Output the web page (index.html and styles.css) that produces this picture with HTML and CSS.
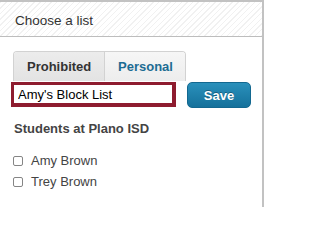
FILE: index.html
```
<!DOCTYPE html>
<html>
<head>
<meta charset="utf-8">
<link rel="stylesheet" href="styles.css">
</head>
<body>
<div class="panel">
  <div class="header">Choose a list</div>
  <div class="content">
    <div class="tabs">
      <div class="tab active">Prohibited</div>
      <div class="tab">Personal</div>
    </div>
    <div class="row">
      <input class="name" type="text" value="Amy's Block List">
      <button class="save">Save</button>
    </div>
    <div class="heading">Students at Plano ISD</div>
    <ul class="students">
      <li><input type="checkbox" class="box"><span>Amy Brown</span></li>
      <li><input type="checkbox" class="box"><span>Trey Brown</span></li>
    </ul>
  </div>
</div>
</body>
</html>
```
FILE: styles.css
```
html, body {
  margin: 0;
  padding: 0;
  background: #fff;
}
body {
  font-family: "Liberation Sans", Arial, sans-serif;
  color: #333;
}
.panel {
  width: 262px;
  height: 205px;
  border-top: 2px solid #c2c2c2;
  border-right: 2px solid #c2c2c2;
}
.header {
  height: 30px;
  padding: 4px 0 0 15px;
  line-height: 30px;
  font-size: 13.5px;
  color: #333;
  border-bottom: 1px solid #bdbdbd;
  background: repeating-linear-gradient(135deg, #f1f1f1 0 1px, #ffffff 1px 4px);
}
.content {
  padding: 14px 0 0 11px;
}
.tabs {
  display: flex;
  margin-left: 2px;
  width: 171px;
  border: 1px solid #d2d2d2;
  border-bottom: 0;
  border-radius: 4px 4px 0 0;
  overflow: hidden;
}
.tab {
  height: 29px;
  line-height: 29px;
  font-size: 13px;
  font-weight: bold;
  box-sizing: border-box;
  background: linear-gradient(#f6f6f6, #ededed);
  color: #1d6c93;
  padding: 0 12px 0 13px;
}
.tab.active {
  width: 91px;
  padding: 0 0 0 13px;
  background: linear-gradient(#ececec, #e3e3e3);
  color: #333;
  border-right: 1px solid #d2d2d2;
}
.row {
  display: flex;
  align-items: flex-start;
  gap: 11px;
  margin-top: 1px;
}
.name {
  box-sizing: border-box;
  width: 165px;
  height: 25px;
  margin: 0;
  padding: 0 0 0 4px;
  border: 3px solid #8e1c2f;
  border-right-width: 4px;
  border-bottom-width: 4px;
  font-family: "Liberation Sans", Arial, sans-serif;
  font-size: 13px;
  color: #000;
  background: #fff;
  outline: none;
}
.save {
  box-sizing: border-box;
  width: 64px;
  height: 26px;
  margin: 0;
  padding: 0;
  border: 1px solid #136890;
  border-radius: 5px;
  background: linear-gradient(#2a90bb, #15719b);
  color: #fff;
  font-family: "Liberation Sans", Arial, sans-serif;
  font-size: 13px;
  font-weight: bold;
  text-shadow: 0 -1px 0 rgba(0, 0, 0, 0.3);
}
.heading {
  margin-top: 13px;
  margin-left: 3px;
  font-size: 13px;
  line-height: 16px;
  font-weight: bold;
  color: #444;
}
.students {
  list-style: none;
  margin: 13px 0 0 2px;
  padding: 0;
}
.students li {
  display: flex;
  align-items: center;
  height: 21px;
  font-size: 13px;
  color: #444;
}
.box {
  appearance: none;
  -webkit-appearance: none;
  box-sizing: border-box;
  width: 10px;
  height: 10px;
  margin: 0 8px 0 0;
  border: 1px solid #858585;
  border-radius: 2px;
  background: #fff;
}
```
